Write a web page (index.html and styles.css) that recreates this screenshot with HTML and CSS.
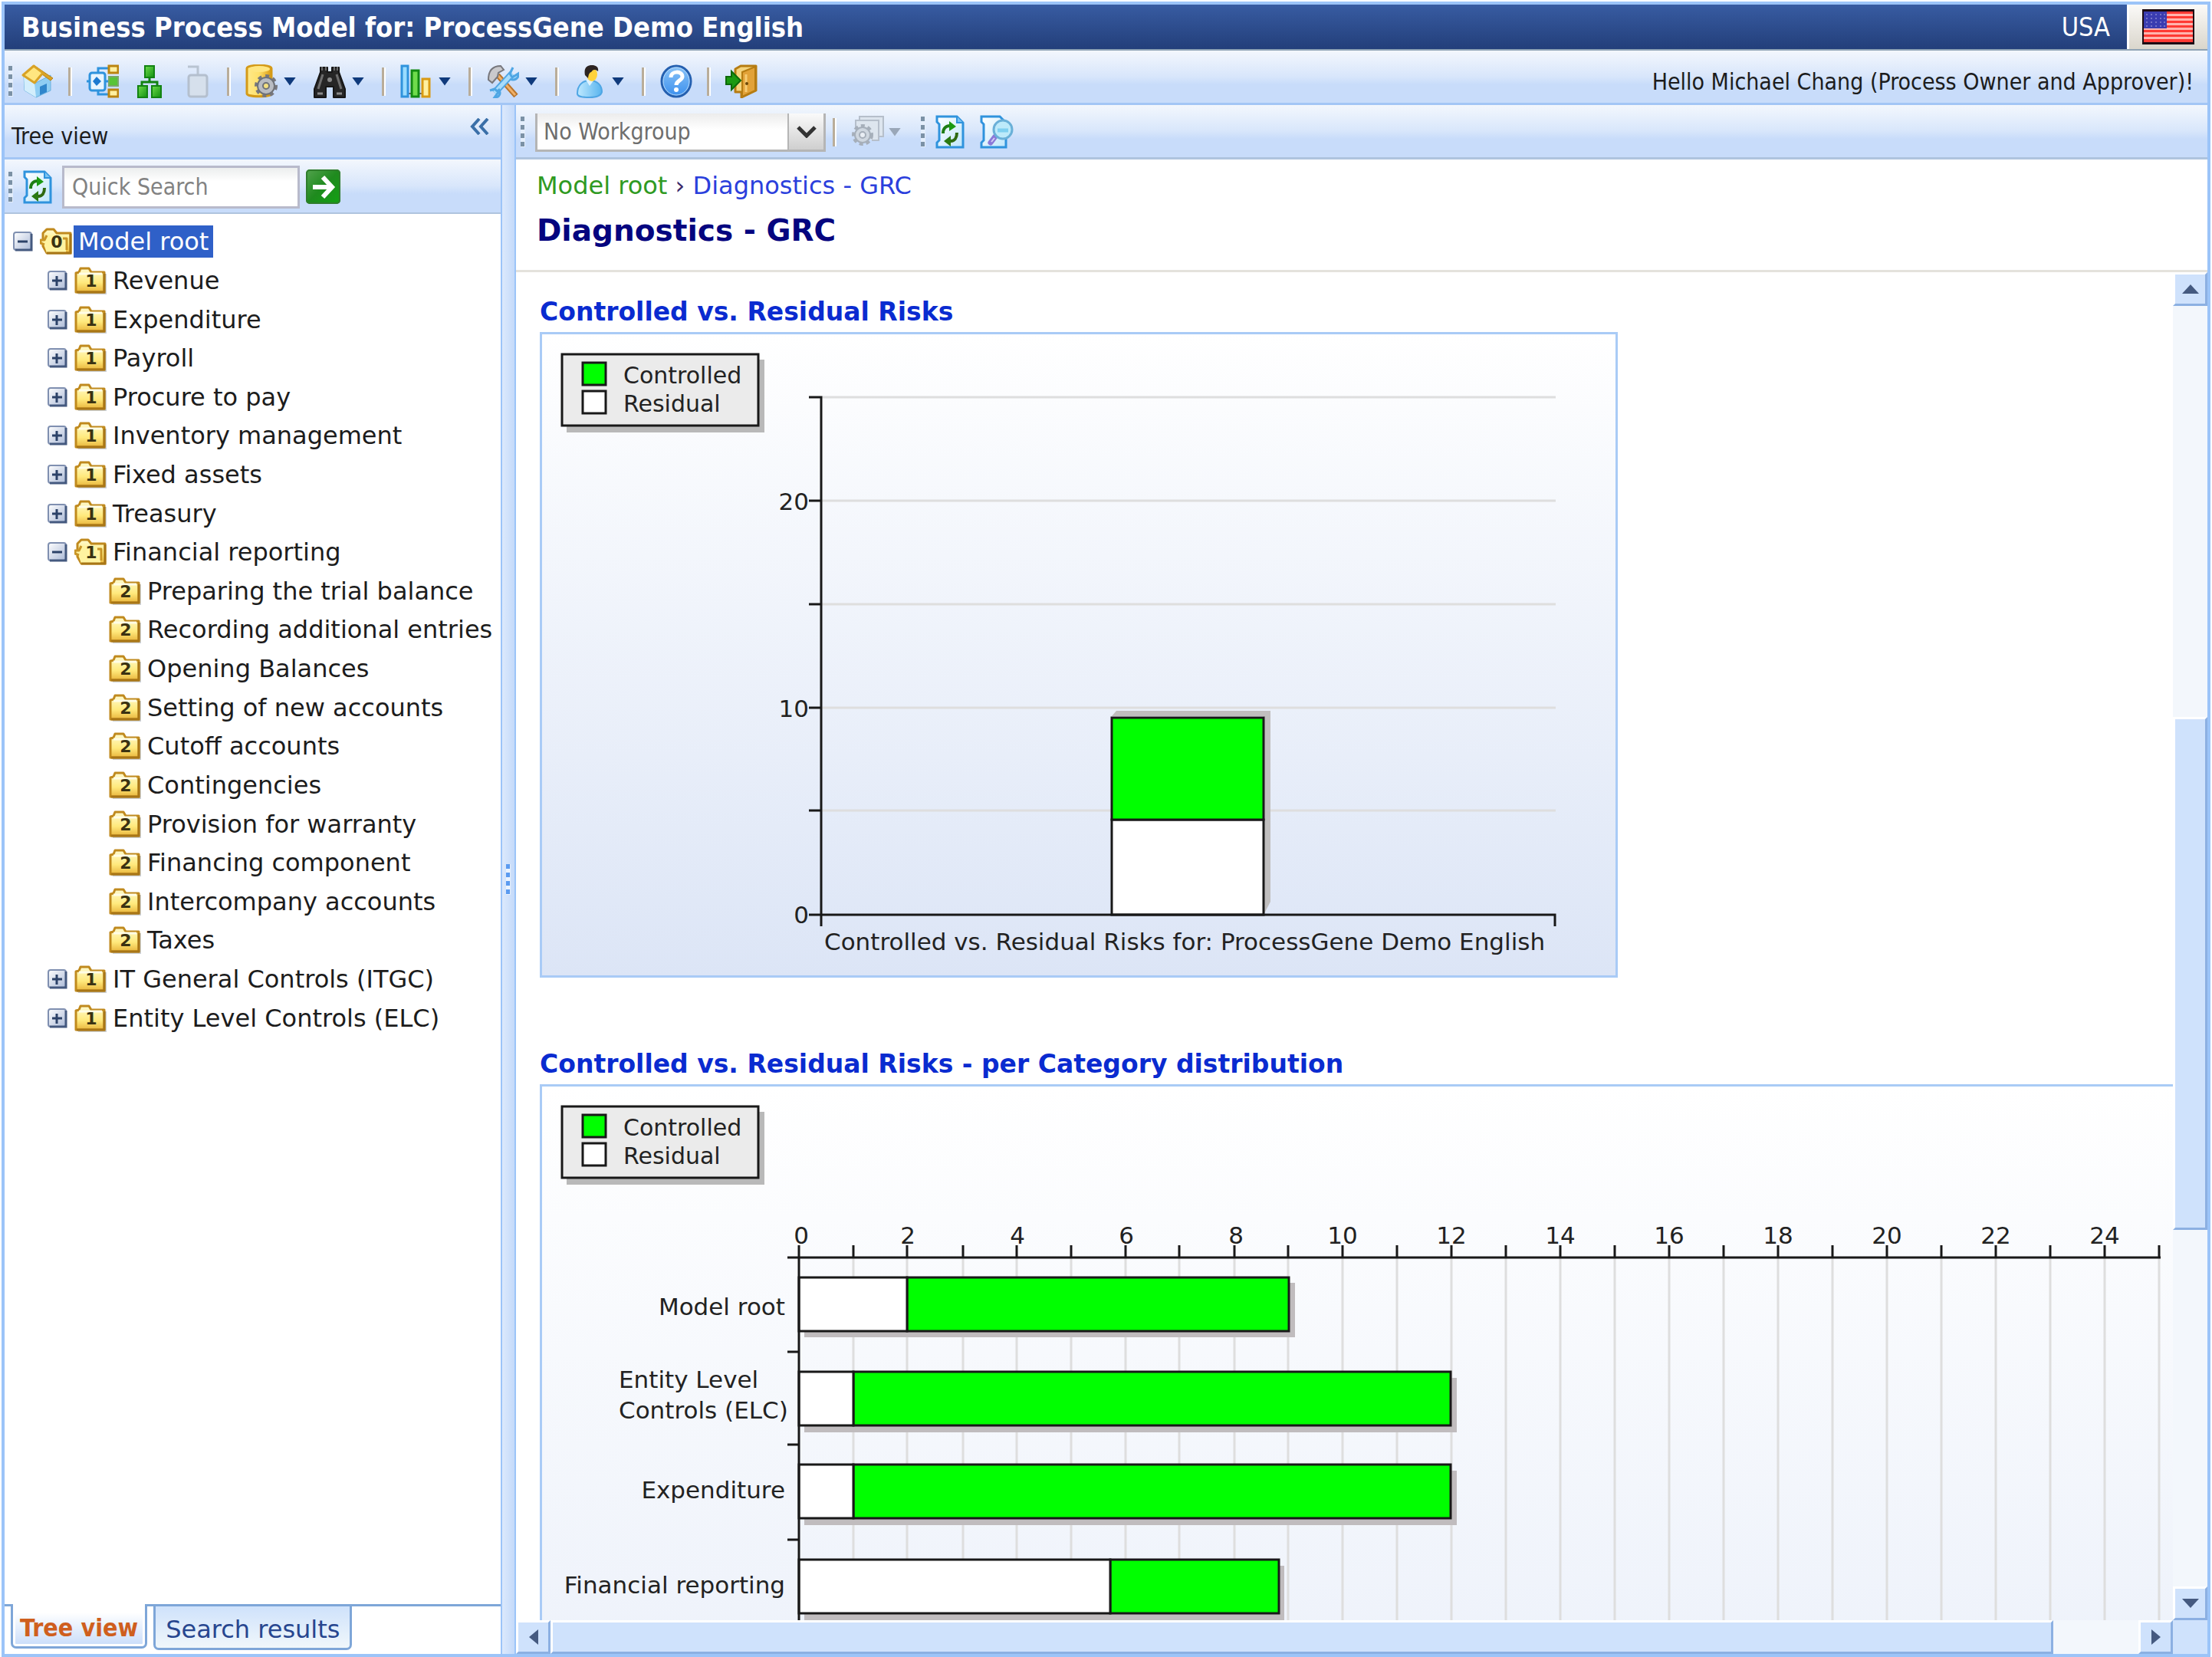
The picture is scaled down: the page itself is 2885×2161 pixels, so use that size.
FILE: index.html
```html
<!DOCTYPE html>
<html lang="en">
<head>
<meta charset="utf-8">
<title>Business Process Model for: ProcessGene Demo English</title>
<link rel="stylesheet" href="styles.css">
</head>
<body>
<svg class="defs" aria-hidden="true">
  <defs>
    <linearGradient id="g-folder" x1="0" y1="0" x2="0" y2="1"><stop offset="0" stop-color="#fffbd0"/><stop offset=".6" stop-color="#ffe97c"/><stop offset="1" stop-color="#e9b63c"/></linearGradient>
    <linearGradient id="g-toggle" x1="0" y1="0" x2="1" y2="1"><stop offset="0" stop-color="#ffffff"/><stop offset="1" stop-color="#aab9d6"/></linearGradient>
    <linearGradient id="g-page" x1="0" y1="0" x2="1" y2="1"><stop offset="0" stop-color="#ffffff"/><stop offset="1" stop-color="#bfe6fb"/></linearGradient>
    <linearGradient id="g-green" x1="0" y1="0" x2="1" y2="1"><stop offset="0" stop-color="#6fdc4c"/><stop offset="1" stop-color="#119010"/></linearGradient>
    <linearGradient id="g-gold" x1="0" y1="0" x2="1" y2="0"><stop offset="0" stop-color="#ffe98a"/><stop offset=".5" stop-color="#ffe06a"/><stop offset="1" stop-color="#d99a12"/></linearGradient>
    <linearGradient id="g-help" x1="0" y1="0" x2="0" y2="1"><stop offset="0" stop-color="#8cc4f7"/><stop offset="1" stop-color="#3a8fee"/></linearGradient>
    <linearGradient id="g-blue" x1="0" y1="0" x2="1" y2="0"><stop offset="0" stop-color="#bfe9ff"/><stop offset="1" stop-color="#58b4ee"/></linearGradient>
    <linearGradient id="g-chart" x1="0" y1="0" x2="0" y2="1"><stop offset="0" stop-color="#ffffff"/><stop offset="1" stop-color="#dce5f6"/></linearGradient>
  </defs>
  <symbol id="i-folder" viewBox="0 0 44 36">
    <path d="M5 35H41V9" fill="none" stroke="#9aa3b0" stroke-width="2" opacity=".5"/>
    <path d="M2 8L6 7L8 2H19L22 7H39V33H2Z" fill="url(#g-folder)" stroke="#c08a1e" stroke-width="3" stroke-linejoin="round"/>
    <path d="M6 9H36" stroke="#fffde6" stroke-width="3"/>
    <path d="M39 9V33H3" fill="none" stroke="#a87616" stroke-width="3"/>
  </symbol>
  <symbol id="i-folder-open" viewBox="0 0 44 36">
    <path d="M4 14V7L9 2H18L22 7H40V33H9L4 24Z" fill="url(#g-folder)" stroke="#c08a1e" stroke-width="3" stroke-linejoin="round"/>
    <path d="M1 16H5L9 10H28L34 18V33H9L5 21H1Z" fill="#fff3a0"/>
    <path d="M6 22L1 20V16H6L9 10M30 14H35V29" fill="none" stroke="#c99526" stroke-width="3" stroke-linejoin="round"/>
    <path d="M40 8V33H9" fill="none" stroke="#a87616" stroke-width="3"/>
  </symbol>
  <symbol id="i-plus" viewBox="0 0 26 26">
    <rect x="1" y="1" width="23" height="23" rx="3" fill="url(#g-toggle)" stroke="#7f8fb0" stroke-width="2"/>
    <path d="M24 3V24H3" fill="none" stroke="#44597f" stroke-width="3"/>
    <path d="M6 13H19M12 7V20" stroke="#2c4268" stroke-width="3"/>
  </symbol>
  <symbol id="i-minus" viewBox="0 0 26 26">
    <rect x="1" y="1" width="23" height="23" rx="3" fill="url(#g-toggle)" stroke="#7f8fb0" stroke-width="2"/>
    <path d="M24 3V24H3" fill="none" stroke="#44597f" stroke-width="3"/>
    <path d="M6 13H19" stroke="#2c4268" stroke-width="3"/>
  </symbol>
  <symbol id="i-refresh" viewBox="0 0 38 44">
    <path d="M2 2H28L36 10V42H2V36L5 33V12L2 9Z" fill="url(#g-page)" stroke="#2f93dd" stroke-width="3"/>
    <path d="M28 2V10H36" fill="#7cc4f2" stroke="#2f93dd" stroke-width="2"/>
    <path d="M10 24C10 17 14 14 19 14" fill="none" stroke="#1e7d14" stroke-width="4"/><path d="M18 8L27 15L18 21Z" fill="#1b9a12"/>
    <path d="M28 23C28 30 25 34 20 34" fill="none" stroke="#2f6a10" stroke-width="4"/><path d="M20 27L11 34L20 41Z" fill="#2a7a12"/>
  </symbol>
</svg>

<div class="app">
  <header class="titlebar">
    <h1 class="titlebar-name">Business Process Model for: ProcessGene Demo English</h1>
    <span class="titlebar-country">USA</span>
    <button class="flag" type="button" aria-label="Language">
      <svg width="68" height="46" viewBox="0 0 68 46">
        <rect width="68" height="46" fill="#1c0c14"/>
        <rect x="2" y="3" width="64" height="40" fill="#ff3a34"/>
        <path d="M2 7.500H66M2 13.500H66M2 19.500H66M2 25.500H66M2 31.500H66M2 37.500H66" stroke="#ffb4ae" stroke-width="3"/>
        <rect x="2" y="3" width="30" height="22" fill="#3a3cb0"/>
        <path d="M6 6V24M12 6V24M18 6V24M24 6V24M29 6V24" stroke="#7472c8" stroke-width="2" stroke-dasharray="2 3"/>
      </svg>
    </button>
  </header>

  <nav class="bar mainbar" aria-label="Main toolbar">
    <span class="grip"></span>
    <div class="tools">
      <button class="tool" type="button" aria-label="Home"><svg width="42" height="44" viewBox="0 0 42 44">
        <path d="M3 15L17 25L38 14V34L19 43L4 34Z" fill="#8ecdf3" stroke="#6ab0dd" stroke-width="1"/>
        <path d="M3 15L17 25L19 43L4 34Z" fill="#d3eefc"/>
        <path d="M24 29L33 25V36L24 40Z" fill="#2f86cc"/>
        <path d="M16 1L41 18L38 21L27 13Z" fill="#d9a326" stroke="#b98212" stroke-width="1"/>
        <path d="M2 14L16 2L28 11L17 24Z" fill="#ffe680" stroke="#d9a326" stroke-width="3" stroke-linejoin="round"/>
      </svg></button>
      <span class="sep"></span>
      <button class="tool" type="button" aria-label="Process map"><svg width="42" height="44" viewBox="0 0 42 44">
        <path d="M15 10V5H29M24 22H29M15 34V39H29M0 22H4" fill="none" stroke="#2f93dd" stroke-width="3"/>
        <rect x="4" y="11" width="20" height="23" rx="3" fill="#e8f5ff" stroke="#2f93dd" stroke-width="3"/>
        <path d="M13 16L19 22L13 28L8 22Z" fill="#1d7ad0"/>
        <rect x="29" y="2" width="12" height="9" fill="#fff0a0" stroke="#bb8410" stroke-width="3"/>
        <rect x="29" y="16" width="12" height="12" fill="#58c438" stroke="#7aa868" stroke-width="2"/>
        <rect x="29" y="33" width="12" height="9" fill="#fff0a0" stroke="#bb8410" stroke-width="3"/>
      </svg></button>
      <button class="tool" type="button" aria-label="Organization"><svg width="42" height="44" viewBox="0 0 42 44">
        <path d="M21 16V23M11 29V23H31V29" fill="none" stroke="#128212" stroke-width="3"/>
        <rect x="15" y="2" width="12" height="15" fill="url(#g-green)" stroke="#128212" stroke-width="2"/>
        <rect x="6" y="28" width="12" height="15" fill="url(#g-green)" stroke="#128212" stroke-width="2"/>
        <rect x="24" y="28" width="12" height="15" fill="url(#g-green)" stroke="#128212" stroke-width="2"/>
      </svg></button>
      <button class="tool" type="button" aria-label="Node" disabled><svg width="42" height="44" viewBox="0 0 42 44">
        <path d="M10 3H23V14" fill="none" stroke="#b9c4d2" stroke-width="3"/>
        <rect x="11" y="14" width="24" height="28" rx="3" fill="#d6e0ec" stroke="#b4bfce" stroke-width="3"/>
      </svg></button>
      <span class="sep"></span>
      <button class="tool drop" type="button" aria-label="Data settings"><svg width="42" height="44" viewBox="0 0 42 44">
        <path d="M2 5C2 0 34 0 34 5V38C34 43 2 43 2 38Z" fill="url(#g-gold)" stroke="#d49a18" stroke-width="3"/>
        <ellipse cx="18" cy="6" rx="14" ry="4" fill="#ffe680"/>
        <circle cx="27" cy="28" r="13" fill="none" stroke="#77777c" stroke-width="4" stroke-dasharray="5 5"/>
        <circle cx="27" cy="28" r="11" fill="#b9bcc2" stroke="#6f7278" stroke-width="2"/>
        <circle cx="27" cy="28" r="4" fill="#f2df80" stroke="#6f7278" stroke-width="2"/>
      </svg><i class="caret"></i></button>
      <button class="tool drop" type="button" aria-label="Find"><svg width="42" height="44" viewBox="0 0 42 44">
        <path d="M9 4H18V10H24V4H33V10L41 32V43H26V29H16V43H1V32L9 10Z" fill="#262626" stroke="#161616" stroke-width="2" stroke-linejoin="round"/>
        <path d="M11 8V3M31 8V3M16 8V3M27 8V3" stroke="#6a6a6a" stroke-width="2"/>
        <path d="M12 13L6 32M30 13L36 32" stroke="#6e6e6e" stroke-width="3"/>
        <path d="M5 38H12M30 38H37" stroke="#8a8a8a" stroke-width="3"/>
        <circle cx="21" cy="20" r="3" fill="#888"/>
      </svg><i class="caret"></i></button>
      <span class="sep"></span>
      <button class="tool drop" type="button" aria-label="Reports"><svg width="42" height="44" viewBox="0 0 42 44">
        <path d="M8 38H38" stroke="#666" stroke-width="2"/>
        <rect x="2" y="2" width="8" height="40" fill="#9adcff" stroke="#2f93dd" stroke-width="3"/>
        <rect x="15" y="8" width="9" height="34" fill="#6fdc4c" stroke="#128a12" stroke-width="3"/>
        <rect x="29" y="19" width="9" height="23" fill="#fff0a0" stroke="#d99a12" stroke-width="3"/>
      </svg><i class="caret"></i></button>
      <span class="sep"></span>
      <button class="tool drop" type="button" aria-label="Tools"><svg width="42" height="44" viewBox="0 0 42 44">
        <path d="M14 14L38 41" stroke="#b8742a" stroke-width="7"/><path d="M14 14L37 40" stroke="#f0b068" stroke-width="3"/>
        <path d="M2 20C2 8 8 2 18 2L22 7L15 11L14 16L7 24Z" fill="#c9c9cc" stroke="#77777c" stroke-width="2"/>
        <path d="M10 37L33 12" stroke="#4fa6e4" stroke-width="9"/><path d="M10 37L33 12" stroke="#a8dcfb" stroke-width="5"/>
        <path d="M34 4L30 12L33 17L41 12C42 18 36 22 30 19M4 34L10 32L15 36L10 43C17 43 19 37 15 32" fill="#a8dcfb" stroke="#4fa6e4" stroke-width="3"/>
      </svg><i class="caret"></i></button>
      <span class="sep"></span>
      <button class="tool drop" type="button" aria-label="User"><svg width="42" height="44" viewBox="0 0 42 44">
        <path d="M5 38C5 27 12 21 21 21C31 21 37 27 37 36C36 40 32 43 21 43C10 43 5 42 5 38Z" fill="url(#g-blue)" stroke="#4fa6e4" stroke-width="2"/>
        <path d="M16 20L21 28L27 20Z" fill="#dff3ff"/>
        <ellipse cx="24" cy="13" rx="7" ry="9" fill="#ffd23a"/>
        <path d="M15 14C13 4 18 1 24 1C30 1 33 4 32 9C28 6 25 7 24 9C22 11 20 10 19 18Z" fill="#2c2422"/>
      </svg><i class="caret"></i></button>
      <span class="sep"></span>
      <button class="tool" type="button" aria-label="Help"><svg width="42" height="44" viewBox="0 0 42 44">
        <ellipse cx="21" cy="22" rx="19" ry="20" fill="url(#g-help)" stroke="#2560b0" stroke-width="3"/>
        <ellipse cx="21" cy="22" rx="17" ry="18" fill="none" stroke="#b8dcfb" stroke-width="1"/>
        <path d="M14 17C14 8 29 8 29 16C29 21 21 21 21 27" fill="none" stroke="#fff" stroke-width="5"/><circle cx="21" cy="33" r="3" fill="#fff"/>
      </svg></button>
      <span class="sep"></span>
      <button class="tool" type="button" aria-label="Log out"><svg width="42" height="44" viewBox="0 0 42 44">
        <path d="M13 6L20 2H40V34L21 43V36H13Z" fill="#f4d47c" stroke="#b67c12" stroke-width="3" stroke-linejoin="round"/>
        <path d="M22 10L39 3V34L22 42Z" fill="#e2a238" stroke="#b67c12" stroke-width="2"/>
        <path d="M27 13V36" stroke="#f6cc74" stroke-width="3"/><circle cx="28" cy="25" r="2" fill="#6b4708"/>
        <path d="M1 16H8V9L20 21L8 33V26H1Z" fill="#1b9a12" stroke="#0d6a0a" stroke-width="2"/>
      </svg></button>
    </div>
    <p class="hello">Hello Michael Chang (Process Owner and Approver)!</p>
  </nav>

  <div class="workspace">
    <aside class="side">
      <div class="bar side-head">
        <h2 class="side-title">Tree view</h2>
        <button class="collapse" type="button" aria-label="Collapse"><svg width="26" height="22" viewBox="0 0 26 22"><path d="M12 1L3 11L12 21M23 1L14 11L23 21" fill="none" stroke="#3a6fa8" stroke-width="4"/></svg></button>
      </div>
      <form class="bar side-search">
        <span class="grip"></span>
        <button class="tool side-refresh" type="button" aria-label="Refresh tree"><svg width="38" height="44"><use href="#i-refresh"/></svg></button>
        <input class="search" type="text" placeholder="Quick Search" aria-label="Quick Search">
        <button class="go" type="button" aria-label="Search"><svg width="45" height="45" viewBox="0 0 45 45"><path d="M9 23H33M22 10L34 23L22 36" fill="none" stroke="#fff" stroke-width="6"/></svg></button>
      </form>
      <ul class="tree">
        <li class="node"><button class="toggle" type="button" aria-label="Collapse"><svg width="26" height="26"><use href="#i-minus"/></svg></button><span class="folder">0<svg width="44" height="36"><use href="#i-folder-open"/></svg></span><a class="label selected" href="#root">Model root</a></li>
        <li class="node l1"><button class="toggle" type="button" aria-label="Expand"><svg width="26" height="26"><use href="#i-plus"/></svg></button><span class="folder">1<svg width="44" height="36"><use href="#i-folder"/></svg></span><a class="label" href="#n">Revenue</a></li>
        <li class="node l1"><button class="toggle" type="button" aria-label="Expand"><svg width="26" height="26"><use href="#i-plus"/></svg></button><span class="folder">1<svg width="44" height="36"><use href="#i-folder"/></svg></span><a class="label" href="#n">Expenditure</a></li>
        <li class="node l1"><button class="toggle" type="button" aria-label="Expand"><svg width="26" height="26"><use href="#i-plus"/></svg></button><span class="folder">1<svg width="44" height="36"><use href="#i-folder"/></svg></span><a class="label" href="#n">Payroll</a></li>
        <li class="node l1"><button class="toggle" type="button" aria-label="Expand"><svg width="26" height="26"><use href="#i-plus"/></svg></button><span class="folder">1<svg width="44" height="36"><use href="#i-folder"/></svg></span><a class="label" href="#n">Procure to pay</a></li>
        <li class="node l1"><button class="toggle" type="button" aria-label="Expand"><svg width="26" height="26"><use href="#i-plus"/></svg></button><span class="folder">1<svg width="44" height="36"><use href="#i-folder"/></svg></span><a class="label" href="#n">Inventory management</a></li>
        <li class="node l1"><button class="toggle" type="button" aria-label="Expand"><svg width="26" height="26"><use href="#i-plus"/></svg></button><span class="folder">1<svg width="44" height="36"><use href="#i-folder"/></svg></span><a class="label" href="#n">Fixed assets</a></li>
        <li class="node l1"><button class="toggle" type="button" aria-label="Expand"><svg width="26" height="26"><use href="#i-plus"/></svg></button><span class="folder">1<svg width="44" height="36"><use href="#i-folder"/></svg></span><a class="label" href="#n">Treasury</a></li>
        <li class="node l1"><button class="toggle" type="button" aria-label="Collapse"><svg width="26" height="26"><use href="#i-minus"/></svg></button><span class="folder">1<svg width="44" height="36"><use href="#i-folder-open"/></svg></span><a class="label" href="#n">Financial reporting</a></li>
        <li class="node l2"><span class="folder">2<svg width="44" height="36"><use href="#i-folder"/></svg></span><a class="label" href="#n">Preparing the trial balance</a></li>
        <li class="node l2"><span class="folder">2<svg width="44" height="36"><use href="#i-folder"/></svg></span><a class="label" href="#n">Recording additional entries</a></li>
        <li class="node l2"><span class="folder">2<svg width="44" height="36"><use href="#i-folder"/></svg></span><a class="label" href="#n">Opening Balances</a></li>
        <li class="node l2"><span class="folder">2<svg width="44" height="36"><use href="#i-folder"/></svg></span><a class="label" href="#n">Setting of new accounts</a></li>
        <li class="node l2"><span class="folder">2<svg width="44" height="36"><use href="#i-folder"/></svg></span><a class="label" href="#n">Cutoff accounts</a></li>
        <li class="node l2"><span class="folder">2<svg width="44" height="36"><use href="#i-folder"/></svg></span><a class="label" href="#n">Contingencies</a></li>
        <li class="node l2"><span class="folder">2<svg width="44" height="36"><use href="#i-folder"/></svg></span><a class="label" href="#n">Provision for warranty</a></li>
        <li class="node l2"><span class="folder">2<svg width="44" height="36"><use href="#i-folder"/></svg></span><a class="label" href="#n">Financing component</a></li>
        <li class="node l2"><span class="folder">2<svg width="44" height="36"><use href="#i-folder"/></svg></span><a class="label" href="#n">Intercompany accounts</a></li>
        <li class="node l2"><span class="folder">2<svg width="44" height="36"><use href="#i-folder"/></svg></span><a class="label" href="#n">Taxes</a></li>
        <li class="node l1"><button class="toggle" type="button" aria-label="Expand"><svg width="26" height="26"><use href="#i-plus"/></svg></button><span class="folder">1<svg width="44" height="36"><use href="#i-folder"/></svg></span><a class="label" href="#n">IT General Controls (ITGC)</a></li>
        <li class="node l1"><button class="toggle" type="button" aria-label="Expand"><svg width="26" height="26"><use href="#i-plus"/></svg></button><span class="folder">1<svg width="44" height="36"><use href="#i-folder"/></svg></span><a class="label" href="#n">Entity Level Controls (ELC)</a></li>
      </ul>
      <div class="tabs">
        <span class="tab-lead"></span>
        <button class="tab tab-active" type="button">Tree view</button>
        <span class="tab-lead"></span>
        <button class="tab" type="button">Search results</button>
        <span class="tab-rest"></span>
      </div>
    </aside>

    <div class="splitter"><span class="grip grip-blue"></span></div>

    <main class="main">
      <div class="bar main-tools">
        <span class="grip"></span>
        <div class="combo">
          <select class="combo-select" aria-label="Workgroup"><option>No Workgroup</option></select>
          <span class="combo-arrow"><svg width="26" height="16" viewBox="0 0 26 16"><path d="M2 2L13 13L24 2" fill="none" stroke="#333" stroke-width="5"/></svg></span>
        </div>
        <span class="sep"></span>
        <button class="tool drop muted" type="button" aria-label="Batch actions" disabled><svg width="42" height="44" viewBox="0 0 42 44">
          <path d="M10 8V2H41V28H36" fill="#dde5ee" stroke="#b6bfcb" stroke-width="2"/>
          <path d="M5 18V7H35V33H26" fill="#dde5ee" stroke="#b6bfcb" stroke-width="2"/>
          <circle cx="14" cy="26" r="12" fill="none" stroke="#a6afba" stroke-width="4" stroke-dasharray="5 4"/>
          <circle cx="14" cy="26" r="10" fill="#cfd7e0" stroke="#a6afba" stroke-width="2"/>
          <circle cx="14" cy="26" r="4" fill="#e9eef4" stroke="#a6afba" stroke-width="2"/>
        </svg><i class="caret"></i></button>
        <span class="grip"></span>
        <button class="tool" type="button" aria-label="Refresh"><svg width="38" height="44"><use href="#i-refresh"/></svg></button>
        <button class="tool" type="button" aria-label="Preview"><svg width="44" height="44" viewBox="0 0 44 44">
          <path d="M2 2H26L34 10V42H2V36L5 33V12L2 9Z" fill="url(#g-page)" stroke="#2f93dd" stroke-width="3"/>
          <path d="M20 28L14 36" stroke="#8a78d8" stroke-width="7" stroke-linecap="round"/><path d="M19 30L15 35" stroke="#d4ccf6" stroke-width="2"/>
          <circle cx="30" cy="19" r="12" fill="#bdeafa" stroke="#6ab0d8" stroke-width="3"/>
          <path d="M23 20H37" stroke="#7fd0f0" stroke-width="5"/>
        </svg></button>
      </div>
      <header class="page-head">
        <nav class="crumbs" aria-label="Breadcrumb"><a class="crumb-root" href="#root">Model root</a> <span class="crumb-sep">›</span> <a class="crumb-here" href="#grc">Diagnostics - GRC</a></nav>
        <h2 class="page-title">Diagnostics - GRC</h2>
      </header>

      <div class="viewport">
        <div class="reports">
          <section class="report">
            <h3 class="report-title">Controlled vs. Residual Risks</h3>
            <div class="chart">
              <svg class="chart-svg" width="1400" height="836" viewBox="0 0 1400 836" role="img" aria-label="Controlled vs. Residual Risks">
                <rect width="1400" height="836" fill="url(#g-chart)"/>
                <g class="legend">
                  <rect x="32" y="33" width="258" height="95" fill="#b9b9b9"/>
                  <rect class="ink" x="26" y="26" width="256" height="93" fill="#ebebeb"/>
                  <rect class="ink controlled" x="53" y="37" width="30" height="29"/>
                  <rect class="ink residual" x="53" y="74" width="30" height="29"/>
                  <text x="106" y="64">Controlled</text>
                  <text x="106" y="101">Residual</text>
                </g>
                <path class="grid" d="M365 82H1322M365 217H1322M365 352H1322M365 487H1322M365 621H1322"/>
                <path d="M749 491H950V740L941 757V498H743Z" fill="#c0bebe"/>
                <rect class="ink residual" x="743" y="633" width="198" height="124"/>
                <rect class="ink controlled" x="743" y="500" width="198" height="133"/>
                <path class="axis" d="M348 82H364V772M348 217H364M348 352H364M348 487H364M348 621H364M348 757H1321V772"/>
                <g class="values-left">
                  <text x="348" y="229">20</text><text x="348" y="499">10</text><text x="348" y="768">0</text>
                </g>
                <text x="368" y="803">Controlled vs. Residual Risks for: ProcessGene Demo English</text>
              </svg>
            </div>
          </section>
          <section class="report">
            <h3 class="report-title">Controlled vs. Residual Risks - per Category distribution</h3>
            <div class="chart">
              <svg class="chart-svg" width="2300" height="1500" viewBox="0 0 2300 1500" role="img" aria-label="Controlled vs. Residual Risks per category">
                <rect width="2300" height="1500" fill="url(#g-chart)"/>
                <g class="legend">
                  <rect x="32" y="33" width="258" height="95" fill="#b9b9b9"/>
                  <rect class="ink" x="26" y="26" width="256" height="93" fill="#ebebeb"/>
                  <rect class="ink controlled" x="53" y="37" width="30" height="29"/>
                  <rect class="ink residual" x="53" y="74" width="30" height="29"/>
                  <text x="106" y="64">Controlled</text>
                  <text x="106" y="101">Residual</text>
                </g>
                <path class="grid" d="M406 224V1400M476 224V1400M549 224V1400M619 224V1400M690 224V1400M761 224V1400M831 224V1400M903 224V1400M973 224V1400M1044 224V1400M1115 224V1400M1186 224V1400M1257 224V1400M1328 224V1400M1399 224V1400M1470 224V1400M1541 224V1400M1612 224V1400M1683 224V1400M1754 224V1400M1825 224V1400M1896 224V1400M1967 224V1400M2038 224V1400M2109 224V1400"/>
                <g fill="#c0bcbe">
                  <rect x="342" y="256" width="640" height="71"/><rect x="342" y="380" width="851" height="71"/><rect x="342" y="501" width="851" height="71"/><rect x="342" y="625" width="626" height="71"/>
                </g>
                <g class="ink controlled">
                  <rect x="476" y="249" width="498" height="70"/><rect x="406" y="372" width="779" height="70"/><rect x="406" y="493" width="779" height="70"/><rect x="741" y="617" width="220" height="70"/>
                </g>
                <g class="ink residual">
                  <rect x="335" y="249" width="141" height="70"/><rect x="335" y="372" width="71" height="70"/><rect x="335" y="493" width="71" height="70"/><rect x="335" y="617" width="406" height="70"/>
                </g>
                <path class="axis" d="M320 223H2111M335 207V1400M320 346H335M320 467H335M320 591H335M406 207V223M476 207V223M549 207V223M619 207V223M690 207V223M761 207V223M831 207V223M903 207V223M973 207V223M1044 207V223M1115 207V223M1186 207V223M1257 207V223M1328 207V223M1399 207V223M1470 207V223M1541 207V223M1612 207V223M1683 207V223M1754 207V223M1825 207V223M1896 207V223M1967 207V223M2038 207V223M2109 207V223"/>
                <g class="values-top">
                  <text x="338" y="205">0</text><text x="477" y="205">2</text><text x="620" y="205">4</text><text x="762" y="205">6</text><text x="905" y="205">8</text><text x="1044" y="205">10</text><text x="1186" y="205">12</text><text x="1328" y="205">14</text><text x="1470" y="205">16</text><text x="1612" y="205">18</text><text x="1754" y="205">20</text><text x="1896" y="205">22</text><text x="2038" y="205">24</text>
                </g>
                <g class="values-left">
                  <text x="317" y="298">Model root</text><text x="317" y="537">Expenditure</text><text x="317" y="661">Financial reporting</text>
                </g>
                <text x="100" y="393">Entity Level</text><text x="100" y="433">Controls (ELC)</text>
              </svg>
            </div>
          </section>
        </div>
        <div class="vscroll" aria-hidden="true">
          <span class="sb-part sb-end"><svg width="22" height="12" viewBox="0 0 22 12"><path d="M0 12L11 0L22 12Z" fill="#455a80"/></svg></span>
          <span class="sb-gap-before"></span>
          <span class="sb-part sb-thumb"></span>
          <span class="sb-gap-after"></span>
          <span class="sb-part sb-end"><svg width="22" height="12" viewBox="0 0 22 12"><path d="M0 0L11 12L22 0Z" fill="#455a80"/></svg></span>
        </div>
        <div class="hscroll" aria-hidden="true">
          <span class="sb-part sb-end"><svg width="12" height="20" viewBox="0 0 12 20"><path d="M12 0L0 10L12 20Z" fill="#455a80"/></svg></span>
          <span class="sb-part sb-thumb"></span>
          <span class="sb-gap"></span>
          <span class="sb-part sb-end"><svg width="12" height="20" viewBox="0 0 12 20"><path d="M0 0L12 10L0 20Z" fill="#455a80"/></svg></span>
        </div>
        <span class="sb-corner"></span>
      </div>
    </main>
  </div>
</div>
</body>
</html>
```
FILE: styles.css
```css
* { box-sizing: border-box; }

body {
  margin: 0;
  padding: 2px 2px 0;
  background: #fff;
  color: #1c1c1c;
  font-family: "DejaVu Sans", Verdana, sans-serif;
  font-size: 32px;
}

h1, h2, h3, p, ul { margin: 0; padding: 0; font-weight: normal; }
button, input, select { font: inherit; color: inherit; margin: 0; }
button { padding: 0; border: 0; background: none; }
svg { display: block; flex: none; }
.defs { position: absolute; width: 0; height: 0; }

.app {
  display: flex;
  flex-direction: column;
  height: calc(100vh - 2px);
  border: 4px solid #9cc4f8;
  overflow: hidden;
}

/* Title bar */
.titlebar {
  display: flex;
  align-items: center;
  height: 60px;
  flex: none;
  padding-left: 22px;
  border-bottom: 2px solid #8fa3b5;
  background: linear-gradient(#385ca2, #233f7a);
  color: #fff;
  font-family: "DejaVu Sans Condensed", "DejaVu Sans", Tahoma, sans-serif;
}
.titlebar-name { flex: 1; font-size: 36px; font-weight: bold; }
.titlebar-country { padding-right: 22px; font-size: 34px; }
.flag {
  display: flex;
  align-items: center;
  justify-content: center;
  width: 105px;
  height: 58px;
  border-left: 3px solid #fff;
  background: linear-gradient(#fbfaf8, #dad6cc);
}

/* Toolbars */
.bar {
  display: flex;
  align-items: center;
  flex: none;
  height: 71px;
  border-bottom: 3px solid #a3c6f5;
  background: linear-gradient(#f3f7fd, #d8e6fb 50%, #c8dcfa 65%, #c8dcfa);
  font-family: "DejaVu Sans Condensed", "DejaVu Sans", Tahoma, sans-serif;
  font-size: 30px;
}
.mainbar { padding: 12px 18px 0 5px; }
.grip {
  width: 6px;
  height: 40px;
  flex: none;
  background: repeating-linear-gradient(#7b91a5 0 6px, #e4eefb 6px 11px);
  border-right: 1px solid #e4eefb;
}
.tools { display: flex; align-items: center; gap: 19px; margin-left: 11px; flex: 1; }
.tool { display: flex; align-items: center; gap: 8px; }
.drop { padding-right: 4px; }
.sep { width: 5px; height: 37px; flex: none; border-left: 3px solid #b9ad9a; border-right: 2px solid #fff; }
.caret {
  width: 16px;
  height: 11px;
  background: #0f3a7c;
  clip-path: polygon(0 0, 100% 0, 50% 100%);
}
.muted .caret { background: #9aa7b8; }

.workspace { display: flex; flex: 1; min-height: 0; }

/* Side panel */
.side {
  display: flex;
  flex-direction: column;
  width: 649px;
  flex: none;
  border-right: 2px solid #9cc4f8;
}
.side-head { justify-content: space-between; padding: 12px 14px 0 9px; }
.side-title { font-size: 30px; }
.collapse { margin-bottom: 24px; }
.side-search { padding: 2px 0 0 5px; border-bottom: 2px solid #afc4de; }
.side-refresh { margin: 0 13px; }
.search {
  width: 310px;
  height: 56px;
  padding: 0 10px;
  border: 3px solid #b8bacb;
  background: linear-gradient(#eceeee, #fff 35%);
}
.search::placeholder { color: #828282; opacity: 1; }
.go {
  margin-left: 8px;
  border-radius: 5px;
  background: linear-gradient(135deg, #53a34e, #1f8a1e 50%, #12a312);
  box-shadow: inset 0 0 0 2px #2f7d2c;
}
.tree {
  display: grid;
  grid-auto-rows: 1fr;
  height: 1074px;
  flex: none;
  padding-top: 11px;
  list-style: none;
}
.node { display: flex; align-items: center; padding-left: 11px; }
.l1 { padding-left: 56px; }
.l2 { padding-left: 136px; }
.toggle { margin-right: 9px; }
.folder {
  position: relative;
  display: grid;
  place-items: center;
  isolation: isolate;
  width: 44px;
  height: 36px;
  padding-top: 2px;
  font-size: 22px;
  font-weight: bold;
  line-height: 34px;
  color: #3a3212;
}
.folder svg { position: absolute; inset: 0; z-index: -1; }
.label { padding: 0 6px; color: #1c1c1c; text-decoration: none; line-height: 42px; white-space: nowrap; }
.selected { background: #2f60c8; color: #fff; }

.tabs { display: flex; align-items: flex-start; margin-top: auto; height: 65px; }
.tab-lead { width: 8px; height: 3px; background: #7ea6d8; }
.tab-rest { flex: 1; height: 3px; background: #7ea6d8; }
.tab {
  height: 60px;
  padding: 6px 13px 0;
  border: 3px solid #7ea6d8;
  border-radius: 0 0 7px 7px;
  background: linear-gradient(#cfe2fb, #f0f7fb);
  color: #27468f;
}
.tab-active {
  height: 58px;
  padding: 6px 9px 0;
  border-top: 0;
  background: linear-gradient(#fff 20%, #c8dcfa);
  box-shadow: inset 0 0 0 3px #fff;
  color: #cf5f1e;
  font-family: "DejaVu Sans Condensed", "DejaVu Sans", Tahoma, sans-serif;
  font-weight: bold;
}

.splitter {
  display: flex;
  align-items: center;
  justify-content: center;
  width: 16px;
  flex: none;
  background: linear-gradient(90deg, #dce9fc, #c4dafa);
}
.grip-blue { background: repeating-linear-gradient(#5b9bf0 0 6px, #eaf3ff 6px 11px); }

/* Main panel */
.main {
  display: flex;
  flex-direction: column;
  flex: 1;
  min-width: 0;
  border-left: 2px solid #9cc4f8;
}
.main-tools { padding: 2px 0 0 6px; border-bottom-color: #afc4de; }
.combo { position: relative; margin: 2px 9px 0 13px; }
.combo-select {
  display: block;
  width: 379px;
  height: 50px;
  padding: 0 60px 0 8px;
  border: 3px solid #b5b5b5;
  border-top: 0;
  border-radius: 0;
  appearance: none;
  background: linear-gradient(#ececec, #fff 45%);
  color: #6e6e6e;
}
.combo-arrow {
  position: absolute;
  top: 0;
  right: 3px;
  bottom: 3px;
  display: flex;
  align-items: center;
  justify-content: center;
  width: 47px;
  border-left: 2px solid #b5b5b5;
  background: linear-gradient(#fafafa, #cfcfcf);
  pointer-events: none;
}
.main-tools .drop { gap: 6px; margin: 0 22px 0 20px; }
.main-tools .grip + .tool { margin: 0 20px 0 13px; }

.page-head {
  flex: none;
  padding: 15px 26px 28px 27px;
  border-bottom: 3px solid #e4e2dc;
}
.crumbs { line-height: 38px; margin-bottom: 17px; }
.crumbs a { text-decoration: none; }
.crumbs .crumb-root { color: #2f9a22; }
.crumbs .crumb-here { color: #2b3fdc; }
.crumb-sep { color: #3c2a6a; }
.page-title { font-size: 39px; font-weight: bold; line-height: 46px; color: #05057f; }

.viewport {
  display: grid;
  grid-template-columns: minmax(0, 1fr) 45px;
  grid-template-rows: minmax(0, 1fr) 44px;
  flex: 1;
  min-height: 0;
}
.reports { overflow: hidden; padding: 30px 0 0 31px; }
.report { margin-bottom: 91px; }
.report-title {
  margin-bottom: 4px;
  font-size: 33px;
  font-weight: bold;
  line-height: 44px;
  color: #0a2bd0;
}
.chart { width: max-content; border: 3px solid #a9cbf6; }

/* Charts */
.chart-svg text { fill: #222; font-size: 31px; }
.chart-svg .legend text { font-size: 30px; }
.values-left { text-anchor: end; }
.values-top { text-anchor: middle; }
.ink, .axis { stroke: #181818; stroke-width: 3; }
.axis { fill: none; }
.grid { fill: none; stroke: #dedede; stroke-width: 3; }
.controlled { fill: #0f0; }
.residual { fill: #fff; }

/* Scroll bars */
.vscroll { display: flex; flex-direction: column; background: #f3f7fc; }
.hscroll { display: flex; background: #f3f7fc; }
.sb-part {
  display: flex;
  align-items: center;
  justify-content: center;
  border: 3px solid #fff;
  border-right-color: #8cb0e2;
  border-bottom-color: #8cb0e2;
  background: #cfe2fc;
}
.sb-end { width: 45px; height: 44px; flex: none; }
.sb-gap-before { flex: 539; }
.vscroll .sb-thumb { flex: 666; }
.sb-gap-after { flex: 467; }
.hscroll .sb-thumb { flex: 1960; }
.sb-gap { flex: 111; }
.sb-corner { background: #cfe2fc; }
```
